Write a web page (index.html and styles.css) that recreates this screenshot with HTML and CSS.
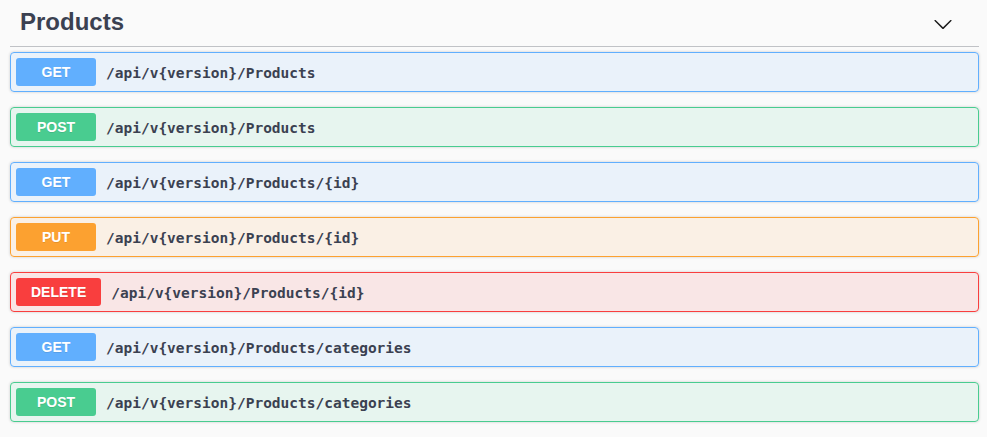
FILE: index.html
```html
<!DOCTYPE html>
<html lang="en">
<head>
<meta charset="utf-8">
<title>Products</title>
<link rel="stylesheet" href="styles.css">
</head>
<body>
<div class="tag-section">
  <h3 class="tag-header">
    <span class="tag-title">Products</span>
    <svg class="tag-arrow" width="20" height="20" viewBox="0 0 20 20" aria-hidden="true">
      <path d="M17.418 6.109c.272-.268.709-.268.979 0s.271.701 0 .969l-7.908 7.83c-.27.268-.707.268-.979 0l-7.908-7.830c-.27-.268-.27-.701 0-.969.271-.268.709-.268.979 0L10 13.25l7.418-7.141z" fill="#1b1b1b"/>
    </svg>
  </h3>
  <div class="op op-get"><span class="method">GET</span><span class="path">/api/v{version}/Products</span></div>
  <div class="op op-post"><span class="method">POST</span><span class="path">/api/v{version}/Products</span></div>
  <div class="op op-get"><span class="method">GET</span><span class="path">/api/v{version}/Products/{id}</span></div>
  <div class="op op-put"><span class="method">PUT</span><span class="path">/api/v{version}/Products/{id}</span></div>
  <div class="op op-delete"><span class="method">DELETE</span><span class="path">/api/v{version}/Products/{id}</span></div>
  <div class="op op-get"><span class="method">GET</span><span class="path">/api/v{version}/Products/categories</span></div>
  <div class="op op-post"><span class="method">POST</span><span class="path">/api/v{version}/Products/categories</span></div>
</div>
</body>
</html>
```
FILE: styles.css
```css
html, body {
  margin: 0;
  padding: 0;
  background: #fafafa;
}
.tag-section {
  padding: 0 8px 0 10px;
}
.tag-header {
  display: flex;
  align-items: center;
  justify-content: space-between;
  margin: 0 0 5px;
  padding: 8px 20px 10px 10px;
  height: 28px;
  border-bottom: 1px solid rgba(59, 65, 81, 0.3);
  font-family: "Liberation Sans", Arial, sans-serif;
  font-size: 24px;
  line-height: 28px;
  font-weight: 700;
  color: #3b4151;
}
.tag-arrow {
  margin-right: 6px;
  margin-top: 3px;
}
.op {
  display: flex;
  align-items: center;
  height: 28px;
  padding: 5px;
  margin: 0 0 15px;
  border: 1px solid;
  border-radius: 4px;
  box-shadow: 0 0 3px rgba(0, 0, 0, 0.19);
}
.method {
  min-width: 80px;
  box-sizing: border-box;
  padding: 6px 15px;
  border-radius: 3px;
  font-family: "Liberation Sans", Arial, sans-serif;
  font-size: 14px;
  line-height: 16px;
  font-weight: 700;
  color: #fff;
  text-align: center;
  text-shadow: 0 1px 0 rgba(0, 0, 0, 0.1);
}
.path {
  padding: 2px 10px 0;
  font-family: "DejaVu Sans Mono", monospace;
  font-size: 14.5px;
  font-weight: 700;
  color: #3b4151;
}
.op-get { background: rgba(97, 175, 254, 0.1); border-color: #61affe; }
.op-get .method { background: #61affe; }
.op-post { background: rgba(73, 204, 144, 0.1); border-color: #49cc90; }
.op-post .method { background: #49cc90; }
.op-put { background: rgba(252, 161, 48, 0.1); border-color: #fca130; }
.op-put .method { background: #fca130; }
.op-delete { background: rgba(249, 62, 62, 0.1); border-color: #f93e3e; }
.op-delete .method { background: #f93e3e; }
```
